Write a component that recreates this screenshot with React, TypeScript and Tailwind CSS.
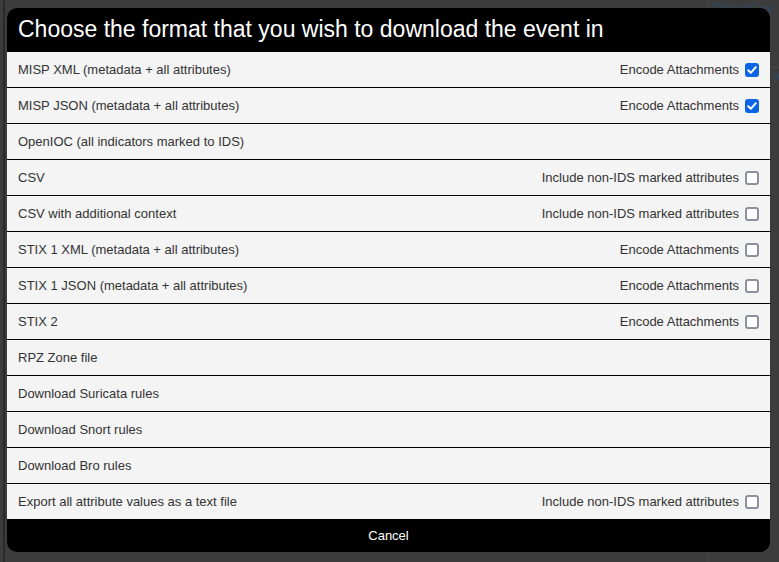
import React from 'react'

const formats = [
  { name: 'MISP XML (metadata + all attributes)', option: 'Encode Attachments', checked: true },
  { name: 'MISP JSON (metadata + all attributes)', option: 'Encode Attachments', checked: true },
  { name: 'OpenIOC (all indicators marked to IDS)' },
  { name: 'CSV', option: 'Include non-IDS marked attributes', checked: false },
  { name: 'CSV with additional context', option: 'Include non-IDS marked attributes', checked: false },
  { name: 'STIX 1 XML (metadata + all attributes)', option: 'Encode Attachments', checked: false },
  { name: 'STIX 1 JSON (metadata + all attributes)', option: 'Encode Attachments', checked: false },
  { name: 'STIX 2', option: 'Encode Attachments', checked: false },
  { name: 'RPZ Zone file' },
  { name: 'Download Suricata rules' },
  { name: 'Download Snort rules' },
  { name: 'Download Bro rules' },
  { name: 'Export all attribute values as a text file', option: 'Include non-IDS marked attributes', checked: false },
]

const Checkbox = ({ checked }: { checked: boolean }) =>
  checked ? (
    <span className="ml-[6px] flex h-[14px] w-[14px] shrink-0 items-center justify-center rounded-[3px] bg-[#0b63e5]">
      <svg viewBox="0 0 14 14" className="h-[14px] w-[14px]">
        <path d="M3.2 7.2 L5.8 9.8 L10.8 4.2" fill="none" stroke="white" strokeWidth="2" strokeLinecap="round" strokeLinejoin="round" />
      </svg>
    </span>
  ) : (
    <span className="ml-[6px] h-[14px] w-[14px] shrink-0 rounded-[3px] border-2 border-[#8f8f9d] bg-white" />
  )

const App = () => {
  return (
    <div className="relative h-[562px] w-[779px] overflow-hidden bg-[#3c3c3c]" style={{ fontFamily: '"Liberation Sans", Arial, sans-serif' }}>
      {/* page behind the overlay */}
      <div className="flex h-full">
        <div className="ml-[3px] h-full w-[2px] bg-[#2a2a2a]" />
        <div className="flex-1" />
        <div className="flex w-[71px] flex-col border-l border-[#474747] pt-[1px] text-[13px] leading-[16px] text-[#2f4a66]">
          <span className="pl-[4px]">ThreatFox I</span>
          <div className="mt-[34px] border-t border-[#474747] pl-[64px]">
            <span>|e</span>
          </div>
        </div>
      </div>

      {/* modal */}
      <div className="absolute left-[7px] top-[8px] flex w-[763px] flex-col overflow-hidden rounded-[10px] bg-black">
        <div className="flex h-[43px] items-center px-[11px] text-[23px] text-white">
          Choose the format that you wish to download the event in
        </div>
        {formats.map((f, i) => (
          <div
            key={i}
            className="flex h-[36px] items-center justify-between border-t border-black bg-[#f4f4f4] pl-[11px] pr-[11px] text-[13px] text-[#333]"
          >
            <span>{f.name}</span>
            {f.option && (
              <span className="flex items-center">
                <span>{f.option}</span>
                <Checkbox checked={!!f.checked} />
              </span>
            )}
          </div>
        ))}
        <div className="flex h-[33px] items-center justify-center text-[13px] text-white">Cancel</div>
      </div>
    </div>
  )
}

export default App
